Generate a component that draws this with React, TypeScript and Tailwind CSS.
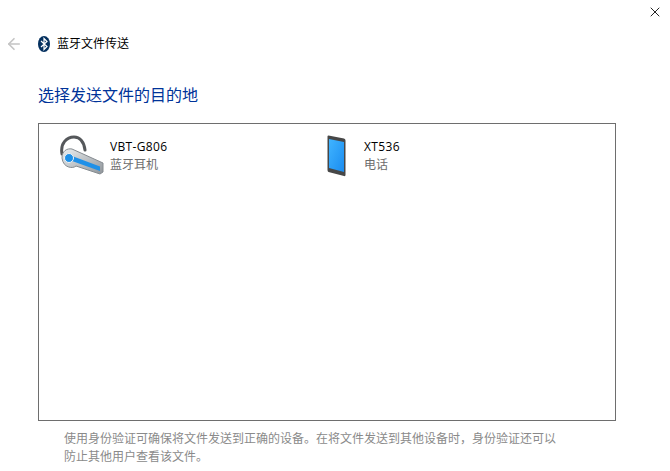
import type { ReactNode } from 'react';
import { ArrowLeft, X } from 'lucide-react';

function HeadsetIcon() {
  return (
    <svg width="48" height="48" viewBox="0 0 48 48" fill="none">
      <defs>
        <linearGradient id="headsetBody" x1="0" y1="0" x2="1" y2="1">
          <stop offset="0" stopColor="#eceff1" />
          <stop offset="1" stopColor="#8f959a" />
        </linearGradient>
      </defs>
      <path d="M3 19 C1 8 8 2 15 2 C21 2 25 7 26 15" stroke="#55585b" strokeWidth="3" strokeLinecap="round" />
      <path d="M3 23 C3 16 8 13 13 14 L44 28 L44 37 L41 39 L17 31 C14 34 4 33 3 23 Z" fill="url(#headsetBody)" stroke="#858b90" strokeWidth="1" />
      <path d="M13 21 L41 31.500 L41 36 L13 26 Z" fill="#1e90e8" />
      <circle cx="10" cy="23" r="4.500" fill="#1e90e8" stroke="#f2f4f5" strokeWidth="1" />
    </svg>
  );
}

function PhoneIcon() {
  return (
    <svg width="20" height="42" viewBox="0 0 20 42">
      <defs>
        <linearGradient id="phoneScreen" x1="0" y1="0" x2="1" y2="1">
          <stop offset="0" stopColor="#40b4ff" />
          <stop offset="1" stopColor="#1a8cf0" />
        </linearGradient>
      </defs>
      <path d="M1.500 0.500 L17 3.500 Q18.500 4 18.500 5.500 L18.500 40 Q18.500 41.500 17 41 L1.500 37 Q0.500 36.500 0.500 35 L0.500 1.500 Q0.500 0.500 1.500 0.500 Z" fill="#474747" />
      <path d="M2 4 L17 7 L17 37 L2 33 Z" fill="url(#phoneScreen)" />
    </svg>
  );
}

function BluetoothBadge() {
  return (
    <svg width="12" height="16" viewBox="0 0 12 16">
      <ellipse cx="6" cy="8" rx="6" ry="8" fill="#04305f" />
      <path d="M3 5 L9 10.500 L6 13.500 L6 2.500 L9 5.500 L3 11" fill="none" stroke="#ffffff" strokeWidth="1.200" />
    </svg>
  );
}

function DeviceItem({ icon, name, kind, className }: { icon: ReactNode; name: string; kind: string; className: string }) {
  return (
    <div className={`flex items-start ${className}`}>
      <div className="flex justify-center w-[48px] shrink-0">{icon}</div>
      <div className="ml-[3px] mt-[3px] text-[12px] leading-[18px]">
        <div className="text-black tracking-[0.35px]">{name}</div>
        <div className="text-[#6d6d6d]">{kind}</div>
      </div>
    </div>
  );
}

export default function App() {
  return (
    <div className="relative w-[670px] h-[471px] overflow-hidden bg-white font-['Open_Sans','Noto_Sans_CJK_SC',sans-serif]">
      <button className="absolute top-[4px] right-[7px] text-black">
        <X size={16} strokeWidth={1.300} />
      </button>

      <div className="flex items-center pl-[5px] pt-[35px] h-[52px]">
        <ArrowLeft size={18} strokeWidth={2.200} className="text-[#c4c4c4]" />
        <div className="ml-[15px]"><BluetoothBadge /></div>
        <span className="ml-[7px] text-[12px] text-black">蓝牙文件传送</span>
      </div>

      <h1 className="ml-[38px] mt-[32px] text-[16px] leading-[22px] font-normal text-[#003399]">选择发送文件的目的地</h1>

      <div className="ml-[38px] mt-[17px] w-[578px] h-[298px] border border-[#6e6e6e] flex pt-[11px]">
        <DeviceItem className="w-[254px] pl-[20px]" icon={<HeadsetIcon />} name="VBT-G806" kind="蓝牙耳机" />
        <div className="-ml-[1px]">
          <DeviceItem className="pl-[21px]" icon={<PhoneIcon />} name="XT536" kind="电话" />
        </div>
      </div>

      <p className="ml-[64px] mt-[9px] w-[500px] text-[12px] leading-[18px] text-[#8a8a8a]">
        使用身份验证可确保将文件发送到正确的设备。在将文件发送到其他设备时，身份验证还可以防止其他用户查看该文件。
      </p>
    </div>
  );
}
